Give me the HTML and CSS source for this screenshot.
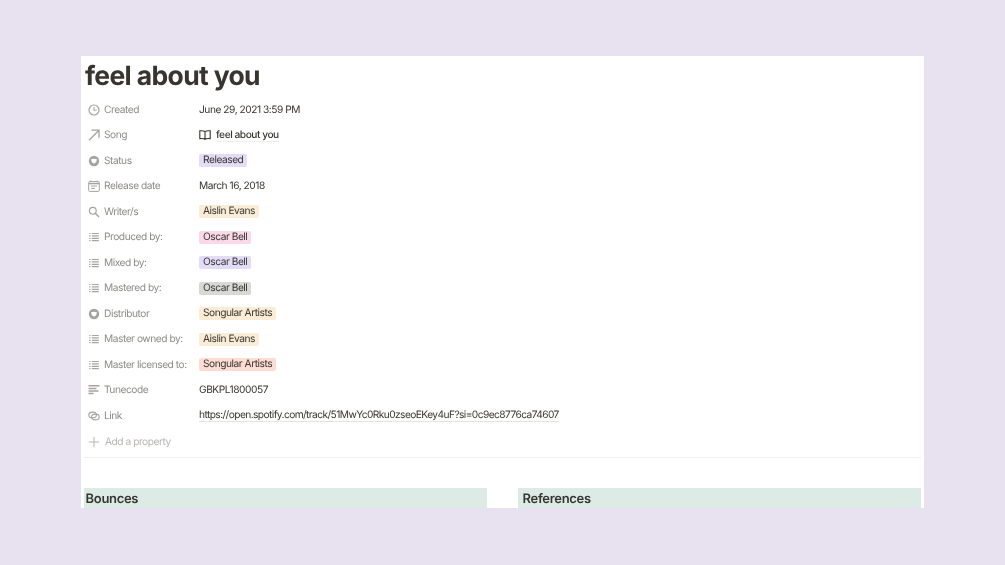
FILE: index.html
```html
<!DOCTYPE html>
<html lang="en">
<head>
<meta charset="utf-8">
<title>feel about you</title>
<link rel="stylesheet" href="styles.css">
</head>
<body>
<svg class="defs" width="0" height="0" aria-hidden="true">
  <symbol id="i-list" viewBox="0 0 12 12"><path d="M1.200 2.500h1.300M3.800 2.500h7M1.200 4.900h1.300M3.800 4.900h7M1.200 7.300h1.300M3.800 7.300h7M1.200 9.700h1.300M3.800 9.700h7" fill="none" stroke="currentColor" stroke-width="1.200"/></symbol>
  <symbol id="i-select" viewBox="0 0 12 12"><circle cx="6" cy="6" r="5.200" fill="currentColor"/><path d="M3 4.300Q6 3.300 9 4.300 9 7 6 8.800 3 7 3 4.300Z" fill="#fff"/></symbol>
</svg>
<main class="page">
  <h1 class="title">feel about you</h1>
  <section class="props">
    <div class="row"><span class="label"><svg class="icon" viewBox="0 0 12 12"><circle cx="6" cy="6" r="5" fill="none" stroke="currentColor" stroke-width="1.200"/><path d="M6 2.900V6.300H8.700" fill="none" stroke="currentColor" stroke-width="1.100"/></svg>Created</span><span class="value">June 29, 2021 3:59 PM</span></div>
    <div class="row"><span class="label"><svg class="icon" viewBox="0 0 12 12"><path d="M1 11.200 11 1.200M3.400 1.200H11V8.800" fill="none" stroke="currentColor" stroke-width="1.300"/></svg>Song</span><span class="value"><svg class="book" viewBox="0 0 12 12"><path d="M6 2.600C5 1.800 3 1.600.8 1.800V9.600C3 9.400 5 9.600 6 10.400 7 9.600 9 9.400 11.200 9.600V1.800C9 1.600 7 1.800 6 2.600ZM6 2.600V10.400" fill="none" stroke="#37352f" stroke-width="1.100"/></svg><span class="page-link">feel about you</span></span></div>
    <div class="row"><span class="label"><svg class="icon"><use href="#i-select"/></svg>Status</span><span class="value"><span class="tag purple">Released</span></span></div>
    <div class="row"><span class="label"><svg class="icon" viewBox="0 0 12 12"><rect x=".7" y="1.600" width="10.600" height="9.800" rx="1" fill="none" stroke="currentColor" stroke-width="1"/><path d="M.7 3.600h10.600" stroke="currentColor" stroke-width="1.400"/><path d="M2.800.6v1.600M9.200.6v1.600M3 6h6M3 8.400h4" stroke="currentColor" stroke-width="1" fill="none"/></svg>Release date</span><span class="value">March 16, 2018</span></div>
    <div class="row"><span class="label"><svg class="icon" viewBox="0 0 12 12"><circle cx="4.800" cy="4.800" r="3.400" fill="none" stroke="currentColor" stroke-width="1.200"/><path d="M7.300 7.300 11 11" stroke="currentColor" stroke-width="1.500"/></svg>Writer/s</span><span class="value"><span class="tag orange">Aislin Evans</span></span></div>
    <div class="row"><span class="label"><svg class="icon"><use href="#i-list"/></svg>Produced by:</span><span class="value"><span class="tag pink">Oscar Bell</span></span></div>
    <div class="row"><span class="label"><svg class="icon"><use href="#i-list"/></svg>Mixed by:</span><span class="value"><span class="tag purple">Oscar Bell</span></span></div>
    <div class="row"><span class="label"><svg class="icon"><use href="#i-list"/></svg>Mastered by:</span><span class="value"><span class="tag gray">Oscar Bell</span></span></div>
    <div class="row"><span class="label"><svg class="icon"><use href="#i-select"/></svg>Distributor</span><span class="value"><span class="tag orange">Songular Artists</span></span></div>
    <div class="row"><span class="label"><svg class="icon"><use href="#i-list"/></svg>Master owned by:</span><span class="value"><span class="tag orange">Aislin Evans</span></span></div>
    <div class="row"><span class="label"><svg class="icon"><use href="#i-list"/></svg>Master licensed to:</span><span class="value"><span class="tag salmon">Songular Artists</span></span></div>
    <div class="row"><span class="label"><svg class="icon" viewBox="0 0 12 12"><path d="M.5 1.800h11M.5 4.400h8M.5 7h10M.5 9.600h5" fill="none" stroke="currentColor" stroke-width="1.500"/></svg>Tunecode</span><span class="value">GBKPL1800057</span></div>
    <div class="row"><span class="label"><svg class="icon" viewBox="0 0 12 12"><ellipse cx="4.600" cy="5" rx="3.800" ry="2.900" fill="none" stroke="currentColor" stroke-width="1.100"/><ellipse cx="7.400" cy="7" rx="3.800" ry="2.900" fill="none" stroke="currentColor" stroke-width="1.100"/></svg>Link</span><span class="value"><span class="url">https://open.spotify.com/track/51MwYc0Rku0zseoEKey4uF?si=0c9ec8776ca74607</span></span></div>
    <div class="row add"><span class="label"><svg class="icon" viewBox="0 0 12 12"><path d="M6 .8v10.400M.8 6h10.400" stroke="currentColor" stroke-width="1"/></svg>Add a property</span></div>
  </section>
  <hr class="divider">
  <section class="columns">
    <h2 class="heading">Bounces</h2>
    <h2 class="heading heading-right">References</h2>
  </section>
</main>
</body>
</html>
```

FILE: styles.css
```css
* { box-sizing: border-box; }

html, body { height: 100%; }

body {
  margin: 0;
  background: #e8e1f0;
  font-family: Inter, "Liberation Sans", sans-serif;
  color: #37352f;
  padding: 56px 81px 57px;
  overflow: hidden;
  text-rendering: geometricPrecision;
}

.defs { display: block; height: 0; }

.page {
  height: 452px;
  background: #fff;
  padding: 0 3px;
  overflow: hidden;
  filter: blur(0.4px);
}

.title {
  margin: 0;
  padding-left: 1px;
  height: 40px;
  font-size: 26.500px;
  line-height: 40px;
  font-weight: 700;
  letter-spacing: -0.65px;
}

.props { padding-top: 1px; }

.row {
  display: flex;
  align-items: center;
  height: 25.500px;
  font-size: 10.200px;
  letter-spacing: -0.47px;
}

.label {
  display: flex;
  align-items: center;
  width: 115px;
  padding-left: 4px;
  color: #8d8c88;
  white-space: nowrap;
}

.icon {
  width: 12px;
  height: 12px;
  margin-right: 4px;
  flex: none;
  color: #a5a4a1;
}

.value {
  display: flex;
  align-items: center;
  color: #37352f;
  white-space: nowrap;
}

.book { width: 12px; height: 12px; margin-right: 5px; }

.page-link {
  font-weight: 500;
  border-bottom: 1px solid #efefee;
  line-height: 12px;
}

.url {
  border-bottom: 1px solid #e4e4e2;
  line-height: 12px;
  letter-spacing: -0.58px;
}

.tag {
  padding: 0 4px;
  border-radius: 2px;
  line-height: 13px;
}

.purple { background: #e3dcf7; }
.orange { background: #fbecd6; }
.pink { background: #fbd9e8; }
.gray { background: #d8d8d6; }
.salmon { background: #fddcd4; }

.add { margin-top: 0.500px; }
.add .label { color: #b6b5b2; }
.add .icon { color: #b6b5b2; margin-right: 5px; }

.divider {
  margin: 2.500px 0 0;
  border: 0;
  border-top: 1px solid #efefee;
}

.columns {
  display: grid;
  grid-template-columns: 403px 403px;
  column-gap: 31px;
  margin-top: 30px;
}

.heading {
  margin: 0;
  height: 21px;
  padding-left: 1.500px;
  background: #dcebe6;
  font-size: 13px;
  line-height: 22px;
  font-weight: 600;
  letter-spacing: -0.3px;
}

.heading-right { padding-left: 4.500px; }
```
